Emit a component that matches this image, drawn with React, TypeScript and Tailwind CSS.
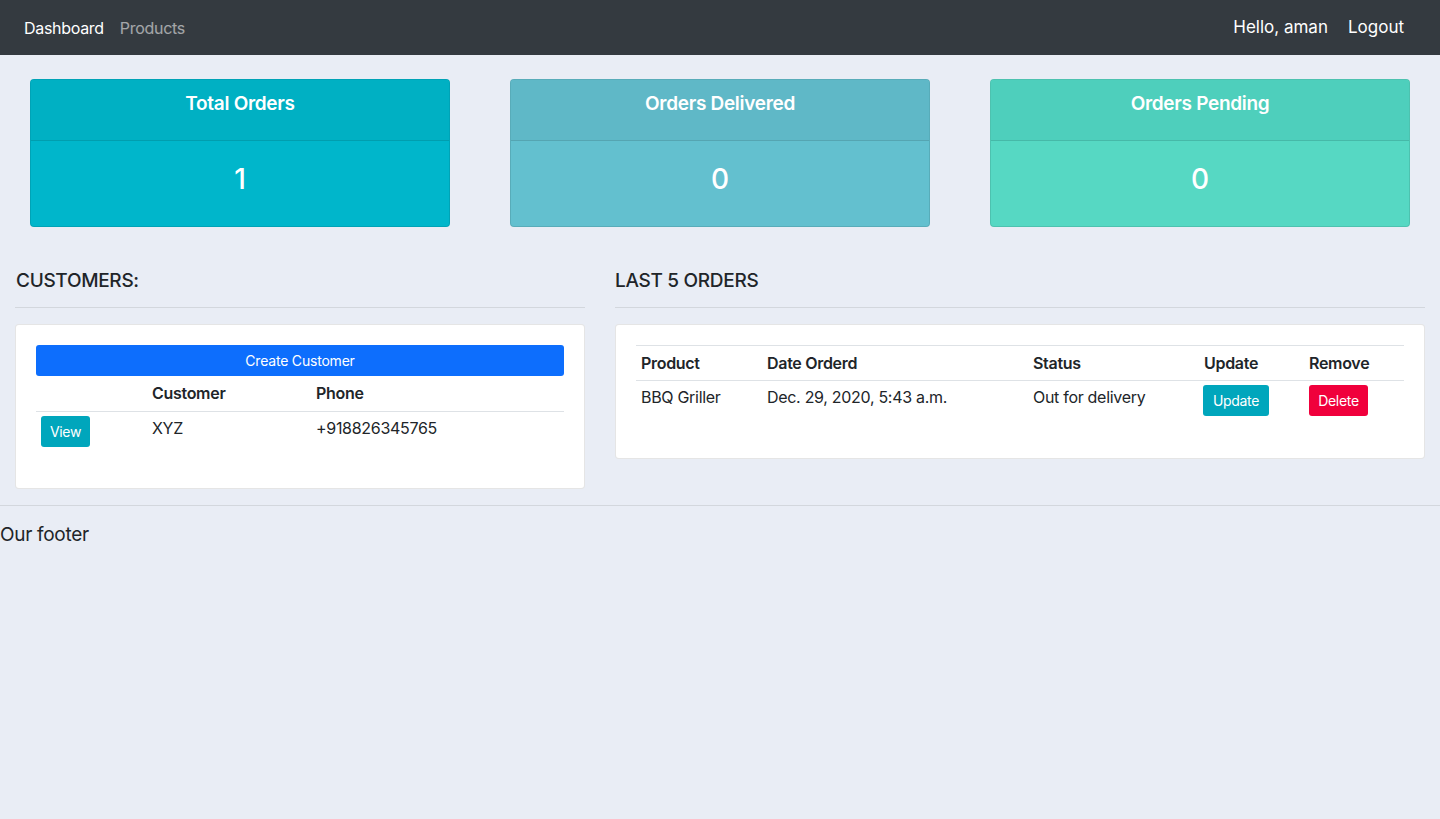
import React from "react";

const font = { fontFamily: "Inter, 'Noto Sans', 'Liberation Sans', sans-serif" };

function StatCard({ title, value, head, body }: { title: string; value: string; head: string; body: string }) {
  return (
    <div className="px-[30px]">
      <div className={`rounded-[4px] border border-black/10 overflow-hidden ${body}`}>
        <div className={`h-[61px] flex justify-center pt-[12px] border-b border-black/10 ${head}`}>
          <span className="text-[19px] leading-[24px] font-semibold text-white tracking-[-0.3px]">{title}</span>
        </div>
        <div className="h-[85px] flex justify-center pt-[18px]">
          <span className="text-[28px] leading-[40px] font-medium text-white">{value}</span>
        </div>
      </div>
    </div>
  );
}

export default function App() {
  return (
    <div className="min-h-[819px] bg-[#e9edf5] text-[#212529]" style={font}>
      <nav className="h-[55px] bg-[#343a40] flex items-center justify-between px-[24px]">
        <div className="flex items-center gap-[16px] text-[16px] tracking-[-0.3px]">
          <span className="text-white">Dashboard</span>
          <span className="text-white/55">Products</span>
        </div>
        <div className="flex items-center gap-[20px] text-[17px] text-white pr-[12px]">
          <span>Hello, aman</span>
          <span>Logout</span>
        </div>
      </nav>

      <div className="grid grid-cols-3 pt-[24px]">
        <StatCard title="Total Orders" value="1" head="bg-[#00b0c3]" body="bg-[#00b6cb]" />
        <StatCard title="Orders Delivered" value="0" head="bg-[#5fb8c7]" body="bg-[#63c0cf]" />
        <StatCard title="Orders Pending" value="0" head="bg-[#4ecfbc]" body="bg-[#56d8c3]" />
      </div>

      <div className="grid grid-cols-[5fr_7fr] pt-[40px]">
        <div className="px-[15px]">
          <h5 className="text-[19px] font-medium h-[27px] leading-[27px] ml-[1px] tracking-[-0.3px]">CUSTOMERS:</h5>
          <div className="border-t border-[#d3d7dd] mt-[13px] mb-[16px]" />
          <div className="bg-white border border-black/10 rounded-[4px] p-[20px] h-[165px]">
            <div className="h-[31px] bg-[#0d6efd] rounded-[3px] text-white text-[14px] tracking-[-0.2px] flex items-center justify-center">
              Create Customer
            </div>
            <table className="w-full text-[16px] tracking-[-0.3px] border-collapse">
              <thead>
                <tr className="h-[35px] border-b border-[#dee2e6]">
                  <th className="w-[111px]"></th>
                  <th className="text-left font-semibold px-[5px] w-[164px]">Customer</th>
                  <th className="text-left font-semibold px-[5px]">Phone</th>
                </tr>
              </thead>
              <tbody>
                <tr className="h-[40px] align-top">
                  <td className="px-[5px] pt-[4px]">
                    <span className="inline-flex items-center justify-center h-[31px] w-[49px] rounded-[3px] bg-[#00a6bc] text-white text-[14px]">View</span>
                  </td>
                  <td className="px-[5px] pt-[4px]">XYZ</td>
                  <td className="px-[5px] pt-[4px]">+918826345765</td>
                </tr>
              </tbody>
            </table>
          </div>
        </div>
        <div className="px-[15px]">
          <h5 className="text-[19px] font-medium h-[27px] leading-[27px] tracking-[-0.3px]">LAST 5 ORDERS</h5>
          <div className="border-t border-[#d3d7dd] mt-[13px] mb-[16px]" />
          <div className="bg-white border border-black/10 rounded-[4px] p-[20px] h-[135px]">
            <table className="w-full text-[16px] tracking-[-0.3px] border-collapse">
              <thead>
                <tr className="h-[35px] border-y border-[#dee2e6]">
                  <th className="text-left font-semibold px-[5px] w-[126px]">Product</th>
                  <th className="text-left font-semibold px-[5px] w-[266px]">Date Orderd</th>
                  <th className="text-left font-semibold px-[5px] w-[171px]">Status</th>
                  <th className="text-left font-semibold px-[5px] w-[105px]">Update</th>
                  <th className="text-left font-semibold px-[5px]">Remove</th>
                </tr>
              </thead>
              <tbody>
                <tr className="align-top">
                  <td className="px-[5px] pt-[4px]">BBQ Griller</td>
                  <td className="px-[5px] pt-[4px]">Dec. 29, 2020, 5:43 a.m.</td>
                  <td className="px-[5px] pt-[4px]">Out for delivery</td>
                  <td className="px-[4px] pt-[4px]">
                    <span className="inline-flex items-center justify-center h-[31px] w-[66px] rounded-[3px] bg-[#00a6bc] text-white text-[14px]">Update</span>
                  </td>
                  <td className="px-[5px] pt-[4px]">
                    <span className="inline-flex items-center justify-center h-[31px] w-[59px] rounded-[3px] bg-[#f0003c] text-white text-[14px]">Delete</span>
                  </td>
                </tr>
              </tbody>
            </table>
          </div>
        </div>
      </div>

      <div className="border-t border-[#d3d7dd] mt-[16px]" />
      <div className="text-[19px] pt-[15px] tracking-[-0.3px]">Our footer</div>
    </div>
  );
}
